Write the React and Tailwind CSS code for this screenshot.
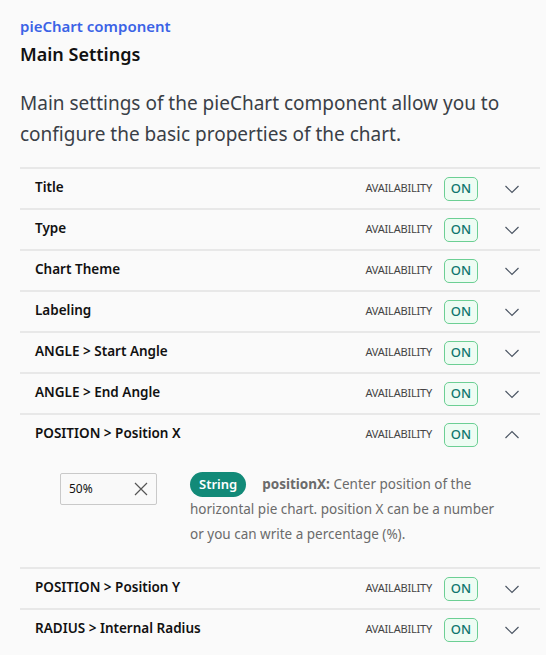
import React from 'react';

const rows = [
  { label: 'Title' },
  { label: 'Type' },
  { label: 'Chart Theme' },
  { label: 'Labeling' },
  { label: 'ANGLE > Start Angle' },
  { label: 'ANGLE > End Angle' },
  { label: 'POSITION > Position X', open: true },
  { label: 'POSITION > Position Y' },
  { label: 'RADIUS > Internal Radius' },
];

function Chevron({ up }) {
  return (
    <svg width="16" height="16" viewBox="0 0 16 16" fill="none" stroke="#4b5563" strokeWidth="1.2">
      {up ? <path d="M1.5 11 L8 4.5 L14.5 11" /> : <path d="M1.5 5 L8 11.5 L14.5 5" />}
    </svg>
  );
}

function Row({ label, open }) {
  return (
    <div className="border-t-2 border-[#e8e8e8]">
      <div className="flex items-center h-[39px] pl-[15px]">
        <div className="flex-1 text-[13.5px] font-semibold text-[#111] -mt-[3px]">{label}</div>
        <span className="text-[11px] text-[#444] tracking-[-0.2px]">AVAILABILITY</span>
        <span className="ml-[12px] h-[24px] w-[34px] flex items-center justify-center rounded-[5px] border-[1.5px] border-[#6ccf94] bg-[#eefcf3] text-[13px] font-medium text-[#0f766e]">
          ON
        </span>
        <span className="ml-[26px] mr-[20px] flex items-center">
          <Chevron up={open} />
        </span>
      </div>
      {open && (
        <div className="flex pl-[40px] pr-[40px] pt-[18px] pb-[20px]">
          <div className="w-[97px] h-[32px] mt-[1px] border border-[#c9c9c9] rounded-[2px] bg-[#f9f9f9] flex items-center justify-between pl-[8px] pr-[8px]">
            <span className="text-[12px] text-[#111]">50%</span>
            <svg width="14" height="14" viewBox="0 0 14 14" stroke="#555" strokeWidth="1.2">
              <path d="M1 1 L13 13 M13 1 L1 13" />
            </svg>
          </div>
          <div className="ml-[33px] flex-1 text-[13.5px] leading-[25px] text-[#6b6b6b]">
            <span className="inline-block align-top bg-[#128a78] text-white text-[13px] font-semibold rounded-full px-[9px] leading-[25px] mr-[16px]">
              String
            </span>
            <b className="font-bold text-[#6b6b6b]">positionX:</b> Center position of the horizontal pie chart. position X can be a number or you can write a percentage (%).
          </div>
        </div>
      )}
    </div>
  );
}

export default function App() {
  return (
    <div className="min-h-[655px] bg-[#fafafa] font-['Noto_Sans',sans-serif] pl-[20px] pr-[6px] pt-[15px]">
      <div className="text-[15px] font-semibold text-[#3b63e6] leading-[22px]">pieChart component</div>
      <h1 className="mt-[4px] text-[18px] font-semibold text-[#111] leading-[26px]">Main Settings</h1>
      <p className="mt-[21px] text-[19px] leading-[31px] text-[#3a3f47] pr-[20px]">
        Main settings of the pieChart component allow you to configure the basic properties of the chart.
      </p>
      <div className="mt-[17px]">
        {rows.map((r) => (
          <Row key={r.label} {...r} />
        ))}
      </div>
    </div>
  );
}
